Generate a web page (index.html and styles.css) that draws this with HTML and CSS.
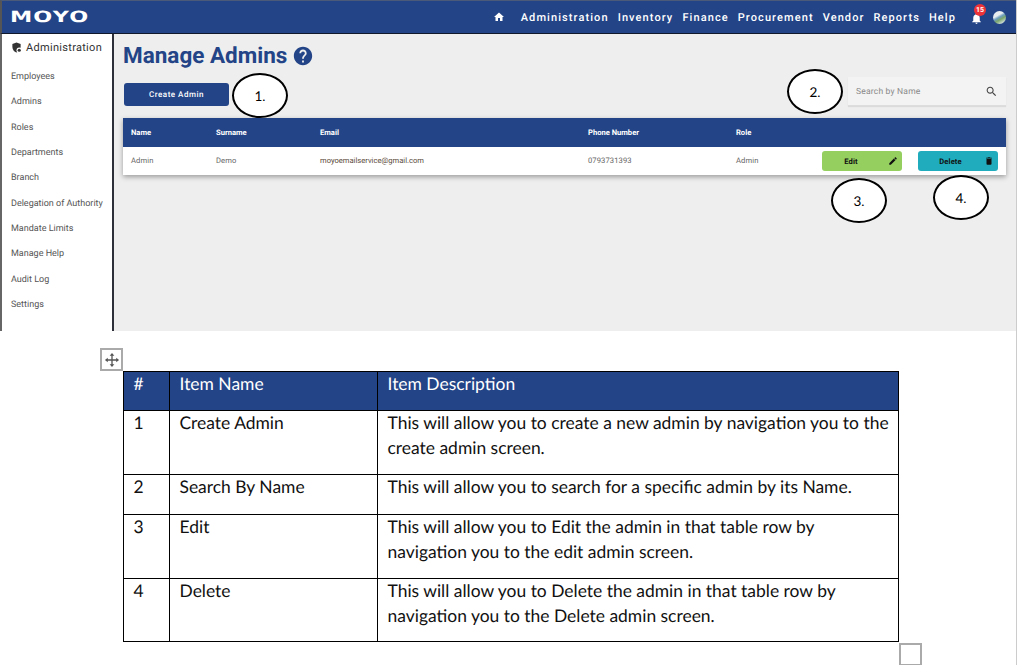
FILE: index.html
```html
<!DOCTYPE html>
<html lang="en">
<head>
  <meta charset="UTF-8" />
  <title>Manage Admins</title>
  <link rel="stylesheet" href="styles.css">
</head>
<body>
  <div class="page">
    <div class="app">
      <header class="topbar">
        <div class="logo">MOYO</div>
        <nav class="nav">
          <svg class="nav-home" viewBox="0 0 24 24"><path d="M10 20v-6h4v6h5v-8h3L12 3 2 12h3v8z"/></svg>
          <a>Administration</a>
          <a>Inventory</a>
          <a>Finance</a>
          <a>Procurement</a>
          <a>Vendor</a>
          <a>Reports</a>
          <a>Help</a>
          <span class="bell">
            <svg viewBox="0 0 24 24"><path d="M12 22c1.1 0 2-.9 2-2h-4c0 1.1.89 2 2 2zm6-6v-5c0-3.07-1.64-5.64-4.5-6.32V4c0-.83-.67-1.5-1.5-1.5s-1.5.67-1.5 1.5v.68C7.63 5.36 6 7.92 6 11v5l-2 2v1h16v-1l-2-2z"/></svg>
            <span class="badge">15</span>
          </span>
          <span class="avatar"></span>
        </nav>
      </header>
      <div class="app-body">
        <aside class="sidebar">
          <div class="side-title">
            <svg viewBox="0 0 24 24"><path d="M12 1 3 4.500v6.500c0 5.500 3.800 10.500 9 12 5.200-1.500 9-6.500 9-12V4.500z"/><circle cx="18" cy="18" r="6" fill="#fff"/><circle cx="18" cy="18" r="3.500"/></svg>
            <span>Administration</span>
          </div>
          <a>Employees</a>
          <a>Admins</a>
          <a>Roles</a>
          <a>Departments</a>
          <a>Branch</a>
          <a>Delegation of Authority</a>
          <a>Mandate Limits</a>
          <a>Manage Help</a>
          <a>Audit Log</a>
          <a>Settings</a>
        </aside>
        <main class="main">
          <h1>Manage Admins
            <svg viewBox="0 0 24 24"><path d="M12 2C6.480 2 2 6.480 2 12s4.480 10 10 10 10-4.480 10-10S17.520 2 12 2zm1 17h-2v-2h2v2zm2.070-7.750l-.9.920C13.450 12.900 13 13.500 13 15h-2v-.5c0-1.100.45-2.100 1.170-2.830l1.240-1.260c.37-.36.59-.86.59-1.410 0-1.100-.9-2-2-2s-2 .9-2 2H8c0-2.210 1.790-4 4-4s4 1.790 4 4c0 .88-.36 1.680-.93 2.250z"/></svg>
          </h1>
          <div class="toolbar">
            <button class="btn-create">Create Admin</button>
            <div class="search">
              <span>Search by Name</span>
              <svg viewBox="0 0 24 24"><path d="M15.500 14h-.79l-.28-.27C15.410 12.590 16 11.110 16 9.500 16 5.910 13.090 3 9.500 3S3 5.910 3 9.500 5.910 16 9.500 16c1.610 0 3.090-.59 4.230-1.570l.27.28v.79l5 4.990L20.490 19l-4.990-5zm-6 0C7.010 14 5 11.990 5 9.500S7.010 5 9.500 5 14 7.010 14 9.500 11.990 14 9.500 14z"/></svg>
            </div>
          </div>
          <table class="admins">
            <colgroup>
              <col class="c-name"><col class="c-surname"><col class="c-email"><col class="c-phone"><col class="c-role"><col class="c-action"><col class="c-action">
            </colgroup>
            <thead>
              <tr><th>Name</th><th>Surname</th><th>Email</th><th>Phone Number</th><th>Role</th><th></th><th></th></tr>
            </thead>
            <tbody>
              <tr>
                <td>Admin</td>
                <td>Demo</td>
                <td class="email">moyoemailservice@gmail.com</td>
                <td>0793731393</td>
                <td>Admin</td>
                <td class="act">
                  <div class="action edit"><span>Edit</span><svg viewBox="0 0 24 24"><path d="M3 17.250V21h3.750L17.810 9.940l-3.750-3.750L3 17.250zM20.710 7.040c.39-.39.39-1.020 0-1.410l-2.340-2.340c-.39-.39-1.020-.39-1.410 0l-1.830 1.830 3.750 3.750 1.830-1.830z"/></svg></div>
                </td>
                <td class="act">
                  <div class="action delete"><span>Delete</span><svg viewBox="0 0 24 24"><path d="M6 19c0 1.100.9 2 2 2h8c1.100 0 2-.9 2-2V7H6v12zM19 4h-3.500l-1-1h-5l-1 1H5v2h14V4z"/></svg></div>
                </td>
              </tr>
            </tbody>
          </table>
        </main>
      </div>
      <div class="callout c1">1.</div>
      <div class="callout c2">2.</div>
      <div class="callout c3">3.</div>
      <div class="callout c4">4.</div>
    </div>

    <section class="doc">
      <div class="move-handle">
        <svg viewBox="0 0 17 17"><path d="M8.500 1 11 4H9.200v3.800H13V6l3 2.500L13 11V9.200H9.200V13H11l-2.500 3L6 13h1.800V9.200H4V11L1 8.500 4 6v1.800h3.800V4H6z"/></svg>
      </div>
      <table class="items">
        <colgroup><col class="i-num"><col class="i-name"><col class="i-desc"></colgroup>
        <thead>
          <tr class="r-head"><th><p>#</p></th><th><p>Item Name</p></th><th><p>Item Description</p></th></tr>
        </thead>
        <tbody>
          <tr class="r-tall"><td><p>1</p></td><td><p>Create Admin</p></td><td><p>This will allow you to create a new admin by navigation you to the create admin screen.</p></td></tr>
          <tr class="r-short"><td><p>2</p></td><td><p>Search By Name</p></td><td><p>This will allow you to search for a specific admin by its Name.</p></td></tr>
          <tr class="r-tall"><td><p>3</p></td><td><p>Edit</p></td><td><p>This will allow you to Edit the admin in that table row by navigation you to the edit admin screen.</p></td></tr>
          <tr class="r-last"><td><p>4</p></td><td><p>Delete</p></td><td><p>This will allow you to Delete the admin in that table row by navigation you to the Delete admin screen.</p></td></tr>
        </tbody>
      </table>
      <div class="resize-handle"></div>
    </section>
  </div>
</body>
</html>
```

FILE: styles.css
```css
* {
  box-sizing: border-box;
}

html, body {
  margin: 0;
  padding: 0;
  background: #fff;
}

body {
  font-family: Roboto, "Liberation Sans", sans-serif;
  text-rendering: geometricPrecision;
  overflow: hidden;
}

.page {
  width: 1017px;
  height: 665px;
  border-right: 1px solid #ccc;
  overflow: hidden;
}

/* screenshot of the app */
.app {
  position: relative;
  height: 331px;
  background: #eee;
}

.topbar {
  height: 34px;
  background: #234487;
  border-top: 1px solid #4a5a78;
  border-bottom: 1px solid #10182c;
  border-left: 2px solid #555;
  display: flex;
  align-items: center;
  justify-content: space-between;
  color: #fff;
}

.logo {
  margin-left: 8px;
  font-family: "DejaVu Sans", sans-serif;
  font-weight: bold;
  font-size: 15.500px;
  letter-spacing: 0.800px;
  transform: scaleX(1.440);
  transform-origin: left center;
}

.nav {
  display: flex;
  align-items: center;
  gap: 9px;
  margin-right: 10px;
  font-size: 11px;
  font-weight: 500;
  letter-spacing: 1.100px;
}

.nav-home {
  width: 12px;
  height: 12px;
  fill: #fff;
  margin-right: 7px;
}

.bell {
  position: relative;
  width: 14px;
  height: 14px;
  margin: 3px 0 0 5px;
}

.bell svg {
  width: 13px;
  height: 13px;
  fill: #fff;
  display: block;
}

.badge {
  position: absolute;
  left: 4px;
  top: -8px;
  width: 12px;
  height: 12px;
  border-radius: 50%;
  background: #ee3338;
  font-size: 7px;
  font-weight: 700;
  letter-spacing: 0;
  line-height: 12px;
  text-align: center;
}

.avatar {
  width: 13px;
  height: 13px;
  border-radius: 50%;
  background: linear-gradient(150deg, #e8eef0 35%, #6f9fc0 48%, #7aa56a 62%, #dfe8ee 90%);
}

.app-body {
  display: flex;
  height: 297px;
}

.sidebar {
  width: 114px;
  background: #fff;
  border-left: 2px solid #666;
  border-right: 2px solid #2d3038;
  padding: 6px 0 0 9px;
  display: flex;
  flex-direction: column;
}

.sidebar a {
  height: 25.350px;
  line-height: 25.350px;
  font-size: 9px;
  letter-spacing: 0;
  color: #555;
  white-space: nowrap;
}

.side-title {
  display: flex;
  align-items: center;
  gap: 4px;
  height: 14px;
  margin-bottom: 11px;
  font-size: 11px;
  font-weight: 400;
  letter-spacing: 0.300px;
  color: #333;
}

.side-title svg {
  width: 11px;
  height: 11px;
  fill: #333;
}

.main {
  flex: 1;
  padding: 6px 10px 0 9px;
}

h1 {
  margin: 0;
  height: 31px;
  display: flex;
  align-items: center;
  gap: 5px;
  font-size: 22.500px;
  font-weight: 700;
  color: #234487;
  white-space: nowrap;
}

h1 svg {
  width: 22px;
  height: 22px;
  fill: #234487;
}

.toolbar {
  display: flex;
  justify-content: space-between;
  align-items: flex-end;
  margin-top: 6px;
}

.btn-create {
  width: 105px;
  height: 23px;
  margin-left: 1px;
  border: none;
  border-radius: 3px;
  background: #234487;
  color: #fff;
  font-family: Roboto, sans-serif;
  font-size: 8px;
  font-weight: 500;
  letter-spacing: 0.500px;
  text-rendering: geometricPrecision;
}

.search {
  width: 158px;
  height: 29px;
  padding: 1px 8px 0;
  display: flex;
  align-items: center;
  justify-content: space-between;
  background: #f3f3f3;
  border-bottom: 1px solid #ddd;
  box-shadow: 0 1px 1px rgba(0, 0, 0, 0.08);
  font-size: 8.500px;
  letter-spacing: 0.200px;
  color: #8a8a8a;
}

.search svg {
  width: 13px;
  height: 13px;
  fill: #444;
}

.admins {
  width: 883px;
  margin-top: 12px;
  border-collapse: collapse;
  table-layout: fixed;
  background: #fff;
  box-shadow: 0 2px 5px rgba(0, 0, 0, 0.35);
  font-size: 7.600px;
}

.c-name { width: 85px; }
.c-surname { width: 104px; }
.c-email { width: 268px; }
.c-phone { width: 148px; }
.c-role { width: 86px; }
.c-action { width: 96px; }

.admins th {
  height: 29px;
  padding: 0 0 0 8px;
  background: #234487;
  color: #fff;
  font-weight: 700;
  text-align: left;
}

.admins td {
  height: 28px;
  padding: 0 0 1px 8px;
  color: #666;
  letter-spacing: 0.100px;
}

.admins td.email {
  color: #5a4a3a;
  letter-spacing: 0;
}

.admins td.act {
  padding-bottom: 0;
}

.action {
  width: 80px;
  height: 20px;
  padding-right: 4px;
  display: flex;
  align-items: center;
  justify-content: flex-end;
  position: relative;
  border-radius: 3px;
  color: #111;
  font-weight: 700;
}

.action span {
  position: absolute;
  left: 0;
  text-align: center;
}

.action svg {
  width: 10px;
  height: 10px;
  fill: #111;
}

.edit { background: #94cf5f; }
.edit span { right: 22px; }
.delete { background: #20acbd; }
.delete span { right: 15px; }

/* hand drawn numbered circles on top of the screenshot */
.callout {
  position: absolute;
  display: flex;
  align-items: center;
  justify-content: center;
  width: 56px;
  height: 45px;
  padding-top: 1px;
  background: #fff;
  border: 2px solid #000;
  border-radius: 50%;
  font-family: Lato, sans-serif;
  font-size: 13.500px;
  color: #000;
}

.c1 { left: 232px; top: 73px; }
.c2 { left: 787px; top: 69px; }
.c3 { left: 831px; top: 178px; }
.c4 { left: 933px; top: 175px; }

/* word document part */
.doc {
  padding-top: 17px;
  background: #fff;
}

.move-handle {
  width: 23px;
  height: 23px;
  margin-left: 100px;
  border: 2px solid #aaa;
  display: flex;
  align-items: center;
  justify-content: center;
}

.move-handle svg {
  width: 16px;
  height: 16px;
  fill: #555;
}

.items {
  width: 775px;
  margin-left: 123px;
  border-collapse: collapse;
  table-layout: fixed;
  font-family: Lato, "Open Sans", sans-serif;
  font-size: 17.450px;
  line-height: 25px;
  color: #111;
}

.i-num { width: 46px; }
.i-name { width: 208px; }
.i-desc { width: 521px; }

.items th, .items td {
  border: 1px solid #000;
  padding: 0 9px 0 9.500px;
  vertical-align: top;
  text-align: left;
  font-weight: normal;
}

.items p {
  margin: -1px 0 0;
}

.items th {
  background: #234487;
  color: #fff;
}

.r-head { height: 39px; }
.r-tall { height: 64px; }
.r-short { height: 40px; }
.r-last { height: 63px; }

.resize-handle {
  width: 23px;
  height: 23px;
  margin: 1px 0 0 899px;
  border: 2px solid #aaa;
}
```
